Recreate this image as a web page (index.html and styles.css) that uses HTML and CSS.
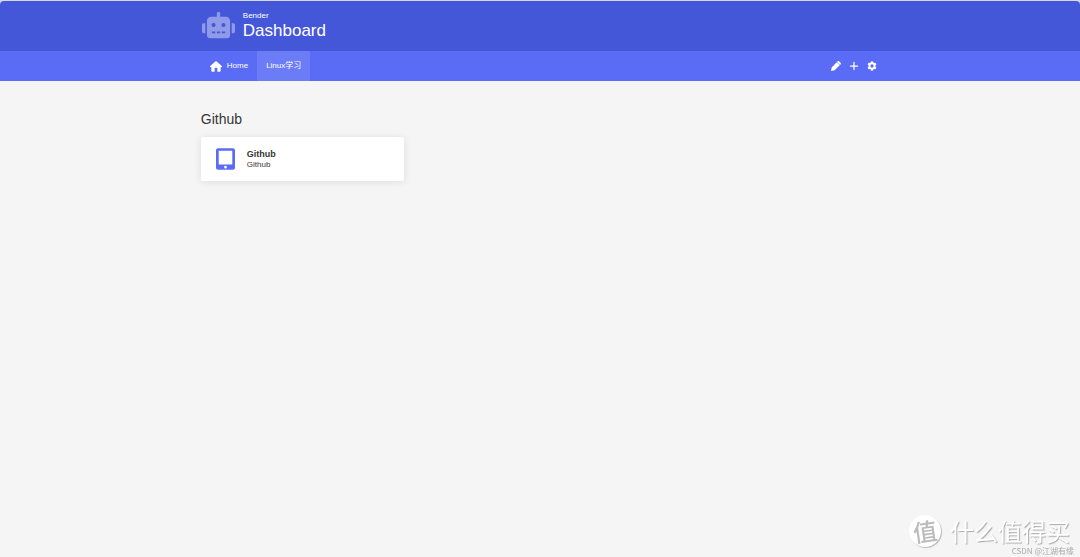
FILE: index.html
```
<!DOCTYPE html>
<html lang="en">
    <head>
        <meta charset="utf-8">
        <title>Dashboard</title>
        <meta name="viewport" content="width=device-width, initial-scale=1.0">
        <link rel="stylesheet" href="styles.css">
    </head>
    <body>
        <header>
            <div class="banner">
                <div class="container banner-inner">
                    <svg class="logo" viewBox="0 0 640 512"><path d="M32 224H64V416H32A32 32 0 0 1 0 384V256A32 32 0 0 1 32 224Zm512-48V448a64 64 0 0 1-64 64H160a64 64 0 0 1-64-64V176a80 80 0 0 1 80-80H288V32a32 32 0 0 1 64 0V96H464A80 80 0 0 1 544 176ZM264 256a40 40 0 1 0-40 40A40 40 0 0 0 264 256Zm-8 128H192v32h64Zm96 0H288v32h64ZM456 256a40 40 0 1 0-40 40A40 40 0 0 0 456 256Zm-8 128H384v32h64ZM640 256V384a32 32 0 0 1-32 32H576V224h32A32 32 0 0 1 640 256Z"/></svg>
                    <div>
                        <p>Bender</p>
                        <h1>Dashboard</h1>
                    </div>
                </div>
            </div>
            <nav class="navbar">
                <div class="container navbar-inner">
                    <a class="nav-item" href="#home">
                        <svg class="home" viewBox="0 0 576 512"><path d="M575.8 255.5c0 18-15 32.1-32 32.1h-32l.7 160.2c0 35-26 64.2-56 64.2H352V352c0-18-14-32-32-32h-64c-18 0-32 14-32 32v160H120c-31 0-56-25-56-56V287.600H32c-18 0-32-14-32-32.100 0-9 3-17 10-24L266.400 8c7-7 15-8 22-8s15 2 21 7L564.800 231.500c8 7 12 15 11 24z"/></svg>
                        <span>Home</span>
                    </a>
                    <a class="nav-item active" href="#linux">Linux学习</a>
                    <div class="tools">
                        <button type="button" aria-label="Edit"><svg viewBox="0 0 512 512"><path d="M410 17c-19-19-49-19-68 0l-33 33 153 153 33-33c19-19 19-49 0-68zM292 67 58 302c-10 10-17 22-21 35L1 481c-3 8-1 17 5 24 6 6 15 8 24 6l144-36c13-4 25-11 35-21l236-234z"/></svg></button>
                        <button type="button" aria-label="Add"><svg viewBox="0 0 512 512"><path d="M256 72V440M72 256H440" fill="none" stroke="#fff" stroke-width="64" stroke-linecap="round"/></svg></button>
                        <button type="button" aria-label="Settings"><svg viewBox="0 0 512 512"><path fill-rule="evenodd" d="M202 20q54-16 108 0l14 62 40 23 60-18q38 40 53 93l-46 44v64l46 44q-15 53-53 93l-60-18-40 23-14 62q-54 16-108 0l-14-62-40-23-60 18q-38-40-53-93l46-44v-64l-46-44q15-53 53-93l60 18 40-23ZM256 172a84 84 0 1 0 0 168 84 84 0 0 0 0-168Z"/></svg></button>
                    </div>
                </div>
            </nav>
        </header>
        <main class="container">
            <h2>Github</h2>
            <div class="cards">
                <a class="card" href="#github">
                    <svg class="tablet" viewBox="0 0 448 512"><path fill-rule="evenodd" d="M48 0H400a48 48 0 0 1 48 48V464a48 48 0 0 1-48 48H48a48 48 0 0 1-48-48V48A48 48 0 0 1 48 0ZM76 64a12 12 0 0 0-12 12V372a12 12 0 0 0 12 12H372a12 12 0 0 0 12-12V76a12 12 0 0 0-12-12ZM224 416a32 32 0 1 0 0 64 32 32 0 0 0 0-64Z"/></svg>
                    <div>
                        <h3>Github</h3>
                        <p>Github</p>
                    </div>
                </a>
            </div>
        </main>
        <div class="watermark">
            <div class="brand">
                <span class="seal"><span class="seal-text">值</span></span>
                <span>什么值得买</span>
            </div>
            <span class="credit">CSDN @江湖有缘</span>
        </div>
    </body>
</html>
```

FILE: styles.css
```
body{margin:0; font-family:"Liberation Sans","Noto Sans CJK SC",sans-serif; font-size:8px; line-height:10px; background-color:#f5f5f5; color:#363636}
h1,h2,h3,p{margin:0; font-weight:400}
a{color:inherit; text-decoration:none}
svg{display:block; fill:#fff}
header{border-top:1px solid #d5d9ef; background-color:#d5d9ef; color:#fff}
.container{box-sizing:border-box; width:63%; max-width:1200px; margin:0 auto; padding:0 1px}

.banner{background-color:#4557d9; border-radius:4px 4px 0 0}
.banner-inner{display:flex; align-items:center; gap:8px; height:50px}
.logo{width:33px; height:28px; margin:0 0 2px 1px; opacity:.4}
h1{font-size:17px; line-height:20px}

.navbar{background-color:#5a6cf5}
.navbar-inner{display:flex; height:30px}
.nav-item{display:flex; align-items:center; gap:5px; padding:0 9px}
.nav-item.active{background-color:#6c7cf6}
.home{width:12px; height:11px}
.tools{display:flex; align-items:center; gap:8px; margin-left:auto; padding-right:2px}
.tools button{border:0; padding:0; background:none; cursor:pointer}
.tools svg{width:10px; height:10px}

main.container{padding-top:28px; padding-bottom:28px}
h2{font-size:14px; line-height:20px}
.cards{display:grid; grid-template-columns:repeat(3,1fr); gap:34px; padding-top:8px}
.card{display:flex; align-items:center; gap:12px; height:44px; padding:0 15px; border-radius:2px; background-color:#fff; box-shadow:0 1px 8px rgba(0,0,0,.1)}
.tablet{width:19px; height:22px; fill:#5a6cf5}
h3{font-size:9px; font-weight:700; line-height:11px}

.watermark{position:fixed; right:6px; bottom:2px; display:flex; flex-direction:column; align-items:flex-end; font-family:"Liberation Sans","Noto Sans CJK SC",sans-serif}
.brand{display:flex; align-items:center; gap:9px; padding-right:4px; color:#fff; font-family:"Noto Sans CJK SC",sans-serif; font-size:24px; line-height:30px; text-shadow:1px 1px 1px #aaa}
.seal{width:32px; border-radius:50%; background-color:#fff; box-shadow:1px 1px 1px #bbb; color:#bbb; line-height:32px; text-align:center; text-shadow:none}
.seal-text{display:block; font-weight:500; transform:rotate(-8deg)}
.credit{color:#aaa; font-family:"Noto Sans CJK SC",sans-serif; line-height:8px}
```
